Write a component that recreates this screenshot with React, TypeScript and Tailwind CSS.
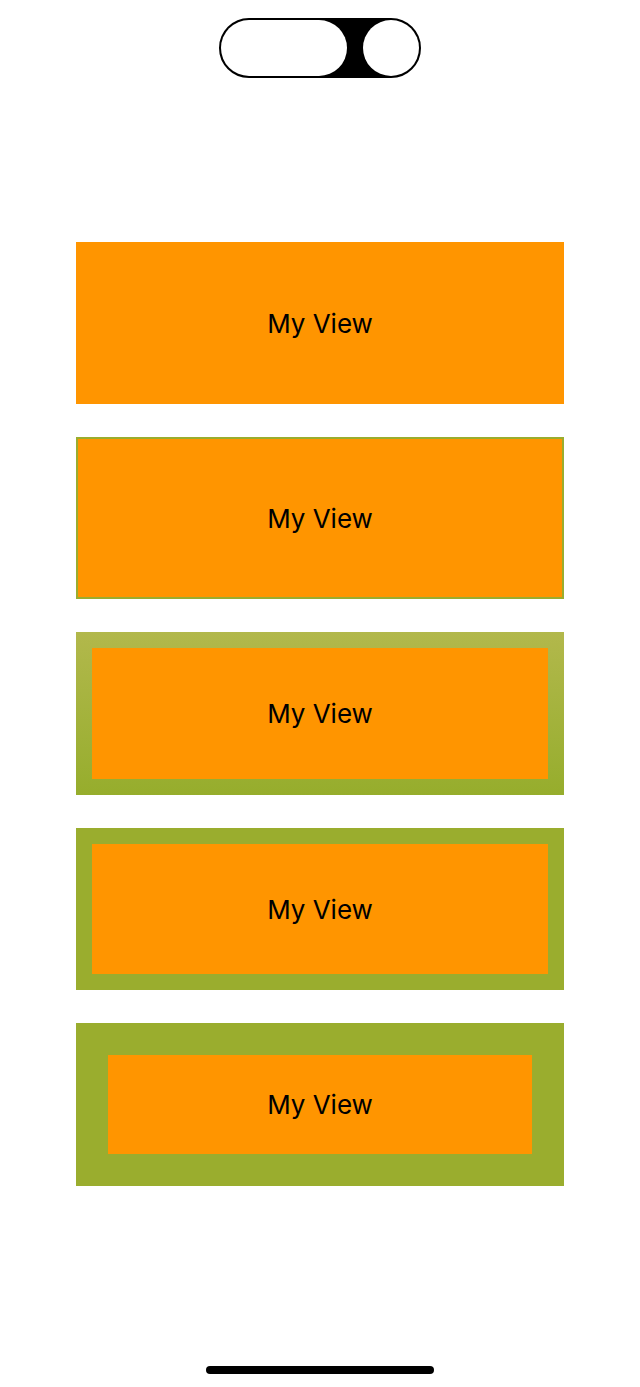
const green = "bg-[#9aad2e]";

const MyView = ({ className = "" }: { className?: string }) => (
  <div
    className={`flex items-center justify-center bg-[#ff9500] text-[26px] text-black ${className}`}
    style={{ fontFamily: "Inter, 'Liberation Sans', sans-serif" }}
  >
    My View
  </div>
);

export default function App() {
  return (
    <div className="relative flex h-[1387px] w-[640px] flex-col items-center bg-white">
      {/* toggle */}
      <div className="mt-[18px] flex h-[60px] w-[202px] items-center justify-between rounded-full border-2 border-black bg-black">
        <div className="h-full w-[126px] rounded-full bg-white" />
        <div className="h-full w-[56px] rounded-full bg-white" />
      </div>

      <div className="mt-[164px] flex w-[488px] flex-col gap-[33px]">
        <MyView className="h-[162px]" />
        <MyView className="h-[162px] border-2 border-[#9aad2e]" />
        <div className="flex h-[163px] bg-gradient-to-b from-[#b2b84b] to-[#96ad2c] p-4">
          <MyView className="flex-1" />
        </div>
        <div className={`flex h-[162px] p-4 ${green}`}>
          <MyView className="flex-1" />
        </div>
        <div className={`flex h-[163px] p-8 ${green}`}>
          <MyView className="flex-1" />
        </div>
      </div>

      {/* home indicator */}
      <div className="absolute bottom-[13px] left-1/2 h-[8px] w-[228px] -translate-x-1/2 rounded-full bg-black" />
    </div>
  );
}
